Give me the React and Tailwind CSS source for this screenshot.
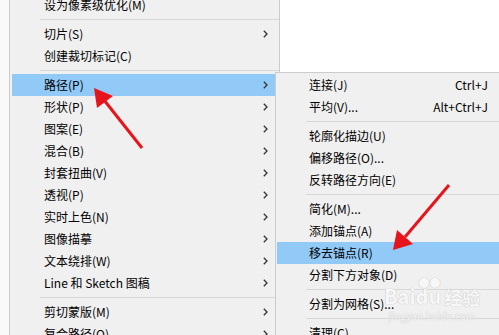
import React from 'react';

const font = { fontFamily: '"Noto Sans CJK SC", "Noto Sans", sans-serif' };

const Chevron = () => (
  <svg width="5" height="8" viewBox="0 0 5 8" className="shrink-0">
    <path d="M0.8 0.8 L4 4 L0.8 7.2" fill="none" stroke="#333" strokeWidth="1.3" />
  </svg>
);

const Sep = ({ indent }) => (
  <div className={`h-[7px] flex items-center ${indent}`}>
    <div className="w-full h-px bg-[#d7d7d7]" />
  </div>
);

const Row = ({ label, arrow, active, shortcut, first }) => (
  <div
    className={`h-[22px] flex items-center pl-[32px] ${active ? 'bg-[#91c9f7]' : ''} ${
      first ? '-mt-[6px]' : ''
    }`}
  >
    <span className="flex-1 text-[12px] text-black leading-none whitespace-nowrap">{label}</span>
    {arrow && (
      <span className="pr-[9px]">
        <Chevron />
      </span>
    )}
    {shortcut && <span className="text-[12px] text-black leading-none pr-[25px]">{shortcut}</span>}
  </div>
);

const leftItems = [
  { label: '设为像素级优化(M)', first: true },
  'sep',
  { label: '切片(S)', arrow: true },
  { label: '创建裁切标记(C)' },
  'sep',
  { label: '路径(P)', arrow: true, active: true },
  { label: '形状(P)', arrow: true },
  { label: '图案(E)', arrow: true },
  { label: '混合(B)', arrow: true },
  { label: '封套扭曲(V)', arrow: true },
  { label: '透视(P)', arrow: true },
  { label: '实时上色(N)', arrow: true },
  { label: '图像描摹', arrow: true },
  { label: '文本绕排(W)', arrow: true },
  { label: 'Line 和 Sketch 图稿', arrow: true },
  'sep',
  { label: '剪切蒙版(M)', arrow: true },
  { label: '复合路径(O)', arrow: true },
];

const subItems = [
  { label: '连接(J)', shortcut: 'Ctrl+J' },
  { label: '平均(V)...', shortcut: 'Alt+Ctrl+J' },
  'sep',
  { label: '轮廓化描边(U)' },
  { label: '偏移路径(O)...' },
  { label: '反转路径方向(E)' },
  'sep',
  { label: '简化(M)...' },
  { label: '添加锚点(A)' },
  { label: '移去锚点(R)', active: true },
  { label: '分割下方对象(D)' },
  'sep',
  { label: '分割为网格(S)...' },
  'sep',
  { label: '清理(C)' },
];

export default function App() {
  return (
    <div className="relative w-[499px] h-[335px] overflow-hidden bg-white flex" style={font}>
      <div className="w-[9px] bg-[#f9f9f9]" />

      {/* main menu */}
      <div className="w-[271px] h-full bg-[#f0f0f0] border-l border-r border-[#cccccc] pl-[2px] pr-[2px]">
        {leftItems.map((it, i) =>
          it === 'sep' ? <Sep key={i} indent="pl-[28px] -mr-[2px]" /> : <Row key={i} {...it} />
        )}
      </div>

      <div className="flex-1 bg-white" />

      {/* submenu flyout */}
      <div className="absolute left-[275px] top-[72px] w-[240px] h-[280px] bg-[#f0f0f0] border border-[#cccccc] px-[1px] pt-[1px]">
        {subItems.map((it, i) =>
          it === 'sep' ? <Sep key={i} indent="pl-[29px]" /> : <Row key={i} {...it} />
        )}
      </div>

      {/* watermark */}
      <div className="absolute left-[384px] top-[286px] flex flex-col items-center pointer-events-none">
        <div className="flex items-end text-[20px] leading-none font-bold text-[#f7f7f7] [text-shadow:0_0_1px_#c6c6c6,0_0_1px_#c6c6c6]">
          <span>Bai</span>
          <span className="relative">
            <span className="absolute -top-[9px] left-[3px] text-[11px]">●●</span>
            du
          </span>
          <span className="ml-[3px] text-[18px]">经验</span>
        </div>
        <div className="text-[10px] leading-none mt-[5px] text-[#f7f7f7] [text-shadow:0_0_1px_#cacaca,0_0_1px_#cacaca]">
          jingyan.baidu.com
        </div>
      </div>

      {/* red annotation arrows */}
      <svg className="absolute inset-0 pointer-events-none" width="499" height="335">
        <line x1="142" y1="148" x2="104" y2="100" stroke="#e8141b" strokeWidth="3" />
        <polygon points="94,88 113,96 97,108" fill="#e8141b" />
        <line x1="449" y1="185" x2="405" y2="237" stroke="#e8141b" strokeWidth="3" />
        <polygon points="393,250 397,230 413,244" fill="#e8141b" />
      </svg>
    </div>
  );
}
